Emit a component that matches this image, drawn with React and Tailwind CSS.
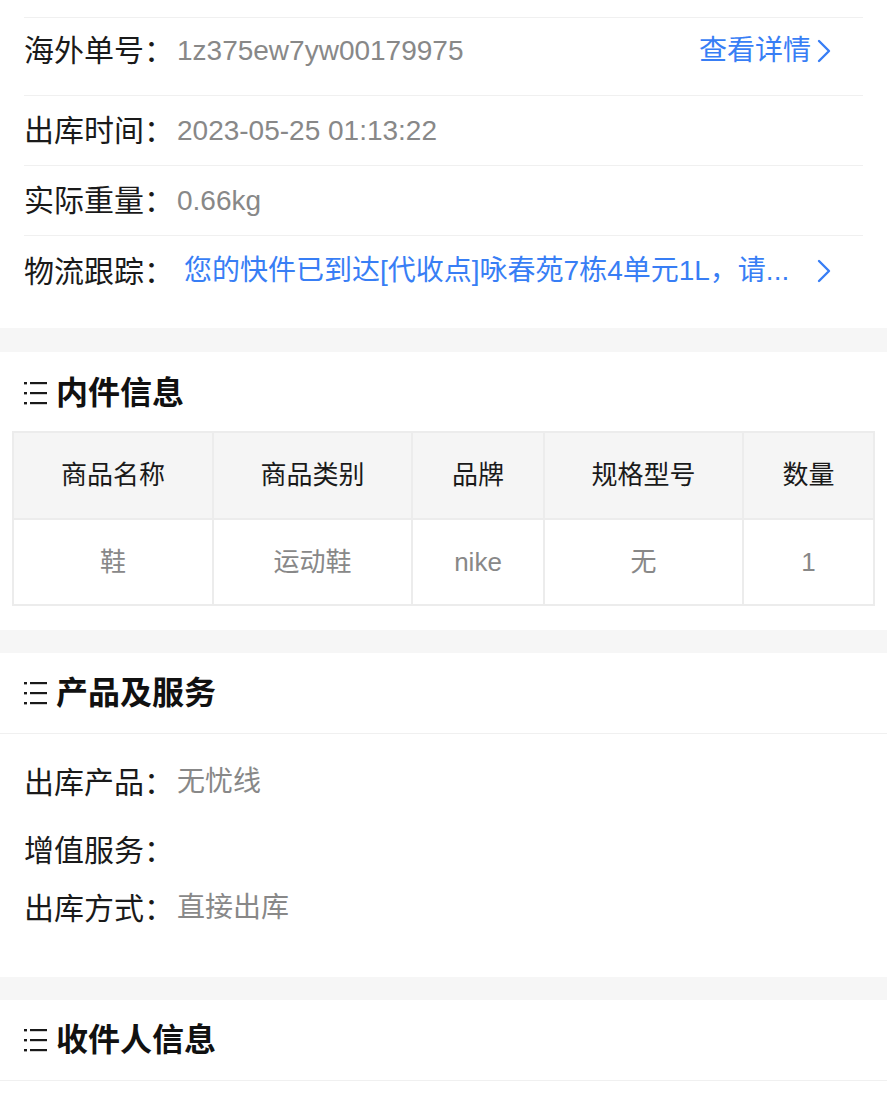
import React from "react";

const FONT = { fontFamily: '"Liberation Sans", "Noto Sans CJK SC", sans-serif' };

function ListIcon() {
  return (
    <svg width="24" height="24" viewBox="0 0 24 24" className="shrink-0">
      <rect x="0" y="1" width="3" height="2.4" fill="#1a1a1a" />
      <rect x="6" y="1" width="17" height="2.2" fill="#1a1a1a" />
      <rect x="0" y="11" width="3" height="2.4" fill="#1a1a1a" />
      <rect x="6" y="11" width="17" height="2.2" fill="#1a1a1a" />
      <rect x="0" y="21" width="3" height="2.4" fill="#1a1a1a" />
      <rect x="6" y="21" width="17" height="2.2" fill="#1a1a1a" />
    </svg>
  );
}

function Chevron() {
  return (
    <svg width="14" height="24" viewBox="0 0 14 24" className="shrink-0">
      <path d="M2 2 L12 12 L2 22" fill="none" stroke="#387ef5" strokeWidth="2.4" strokeLinecap="round" strokeLinejoin="round" />
    </svg>
  );
}

function SectionTitle({ title, bordered }) {
  return (
    <div className={`h-[81px] flex items-center px-6 ${bordered ? "border-b border-[#f0f0f0]" : ""}`}>
      <ListIcon />
      <span className="ml-2 text-[32px] font-bold text-[#111]">{title}</span>
    </div>
  );
}

function Row({ label, children, h = "h-[70px]", last }) {
  return (
    <div className={`flex items-center pr-8 ${h} ${last ? "" : "border-b border-[#f0f0f0]"}`}>
      <span className="text-[30px] text-[#1a1a1a] whitespace-nowrap">{label}</span>
      {children}
    </div>
  );
}

const items = [{ name: "鞋", type: "运动鞋", brand: "nike", spec: "无", qty: "1" }];

export default function App() {
  return (
    <div className="bg-white w-[887px] min-h-[1110px]" style={FONT}>
      {/* 出库信息 */}
      <div className="pt-[17px] pb-[22px]">
        <div className="mx-6 border-t border-[#f0f0f0]">
          <Row label="海外单号：" h="h-[78px] pb-[12px]">
            <span className="ml-[3px] text-[28px] text-[#888]">1z375ew7yw00179975</span>
            <span className="ml-auto flex items-center gap-[6px] text-[28px] text-[#387ef5]">
              查看详情
              <Chevron />
            </span>
          </Row>
          <Row label="出库时间：">
            <span className="ml-[3px] text-[28px] text-[#888]">2023-05-25 01:13:22</span>
          </Row>
          <Row label="实际重量：">
            <span className="ml-[3px] text-[28px] text-[#888]">0.66kg</span>
          </Row>
          <Row label="物流跟踪：" last>
            <span className="ml-[10px] whitespace-nowrap text-[28px] text-[#387ef5]">
              您的快件已到达[代收点]咏春苑7栋4单元1L，请...
            </span>
            <span className="ml-auto">
              <Chevron />
            </span>
          </Row>
        </div>
      </div>

      <div className="h-[24px] bg-[#f6f6f6]" />

      {/* 内件信息 */}
      <div className="pb-[24px]">
        <SectionTitle title="内件信息" />
        <div className="mx-3 -mt-[2px]">
          <table className="w-full border-collapse text-[26px] text-center">
            <thead>
              <tr className="bg-[#f5f5f5] text-[#1a1a1a] h-[87px]">
                <th className="w-[200px] font-normal border-2 border-[#ececec]">商品名称</th>
                <th className="w-[199px] font-normal border-2 border-[#ececec]">商品类别</th>
                <th className="w-[132px] font-normal border-2 border-[#ececec]">品牌</th>
                <th className="w-[199px] font-normal border-2 border-[#ececec]">规格型号</th>
                <th className="font-normal border-2 border-[#ececec]">数量</th>
              </tr>
            </thead>
            <tbody>
              {items.map((it, i) => (
                <tr key={i} className="h-[86px] text-[#888]">
                  <td className="border-2 border-[#ececec]">{it.name}</td>
                  <td className="border-2 border-[#ececec]">{it.type}</td>
                  <td className="border-2 border-[#ececec]">{it.brand}</td>
                  <td className="border-2 border-[#ececec]">{it.spec}</td>
                  <td className="border-2 border-[#ececec]">{it.qty}</td>
                </tr>
              ))}
            </tbody>
          </table>
        </div>
      </div>

      <div className="h-[23px] bg-[#f6f6f6]" />

      {/* 产品及服务 */}
      <div>
        <SectionTitle title="产品及服务" bordered />
        <div className="px-6 pt-[19px] pb-[40px]">
          <Row label="出库产品：" h="h-[58px] mb-[10px]" last>
            <span className="ml-[3px] text-[28px] text-[#888]">无忧线</span>
          </Row>
          <Row label="增值服务：" h="h-[58px]" last />
          <Row label="出库方式：" h="h-[58px]" last>
            <span className="ml-[3px] text-[28px] text-[#888]">直接出库</span>
          </Row>
        </div>
      </div>

      <div className="h-[23px] bg-[#f6f6f6]" />

      {/* 收件人信息 */}
      <div>
        <SectionTitle title="收件人信息" bordered />
      </div>
    </div>
  );
}
